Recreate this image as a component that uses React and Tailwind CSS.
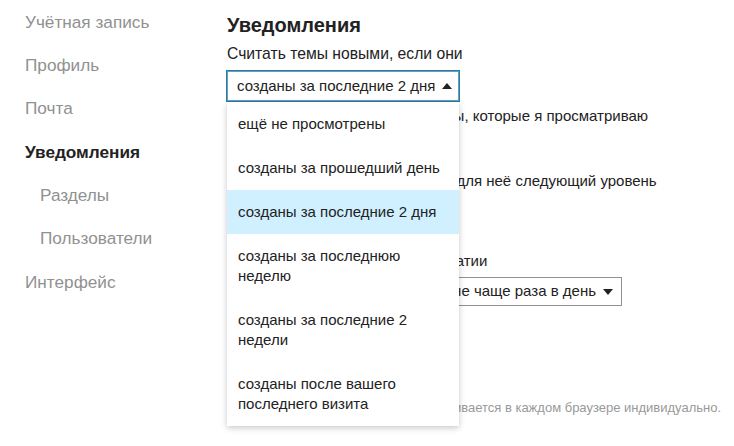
import React from "react";

const F = { fontFamily: '"Liberation Sans", Arial, sans-serif' };

function Up() {
  return (
    <svg width="10" height="6" viewBox="0 0 10 6" className="shrink-0">
      <path d="M0 6 L5 0 L10 6 Z" fill="#222" />
    </svg>
  );
}
function Down() {
  return (
    <svg width="10" height="6" viewBox="0 0 10 6" className="shrink-0">
      <path d="M0 0 L10 0 L5 6 Z" fill="#222" />
    </svg>
  );
}

const nav = [
  { t: "Учётная запись" },
  { t: "Профиль" },
  { t: "Почта" },
  { t: "Уведомления", active: true },
  { t: "Разделы", sub: true },
  { t: "Пользователи", sub: true },
  { t: "Интерфейс" },
];

const options = [
  { t: "ещё не просмотрены" },
  { t: "созданы за прошедший день" },
  { t: "созданы за последние 2 дня", sel: true },
  { t: "созданы за последнюю неделю" },
  { t: "созданы за последние 2 недели" },
  { t: "созданы после вашего последнего визита" },
];

export default function App() {
  return (
    <div style={F} className="w-[734px] h-[446px] overflow-hidden bg-white text-[#222] flex">
      <nav className="w-[227px] shrink-0 pl-[25px] pt-[1px] flex flex-col">
        {nav.map((n) => (
          <div
            key={n.t}
            className={
              "h-[43.33px] flex items-center text-[17.2px] " +
              (n.active ? "font-bold text-[#222]" : "text-[#919191]") +
              (n.sub ? " pl-[15px]" : "")
            }
          >
            {n.t}
          </div>
        ))}
      </nav>
      <main className="flex-1 pt-[13px] flex flex-col items-start text-[15px]">
        <h2 className="text-[20px] leading-[24px] font-bold">Уведомления</h2>
        <div className="mt-[7px] leading-[20px] text-[15.7px]">Считать темы новыми, если они</div>
        <div className="relative mt-[6px] -ml-[1px]">
          <div className="w-[234px] h-[32px] border border-[#0088cc] flex">
            <div className="flex-1 border border-[#919191] flex items-center justify-between pl-[9px] pr-[6px]">
              <span className="whitespace-nowrap">созданы за последние 2 дня</span>
              <Up />
            </div>
          </div>
          <ul className="absolute z-10 left-[1px] top-[32px] w-[232px] bg-white shadow-[0_2px_6px_rgba(0,0,0,0.22)]">
            {options.map((o) => (
              <li
                key={o.t}
                className={
                  "min-h-[44px] px-[11px] py-[11.5px] leading-[20.5px] flex items-center " +
                  (o.sel ? "bg-[#d1f0ff]" : "")
                }
              >
                <span>{o.t}</span>
              </li>
            ))}
          </ul>
        </div>
        <div className="mt-[4px] leading-[20px] whitespace-nowrap">Автоматически отслеживать темы, которые я просматриваю</div>
        <div className="mt-[5px] h-[30px] w-[200px] border border-[#919191] flex items-center justify-between px-[10px]">
          <span>после 4 минут</span>
          <Down />
        </div>
        <div className="mt-[10px] leading-[20px] whitespace-nowrap">Когда я отвечаю в теме, ставить для неё следующий уровень</div>
        <div className="mt-[5px] h-[30px] w-[200px] border border-[#919191] flex items-center justify-between px-[10px]">
          <span>Отслеживать</span>
          <Down />
        </div>
        <div className="mt-[25px] leading-[20px] whitespace-nowrap">Уведомлять при получении симпатии</div>
        <div className="mt-[6px] h-[29px] w-[395px] border border-[#919191] flex items-center justify-end gap-[7px] pr-[8px]">
          <span className="whitespace-nowrap">при первой симпатии и затем не чаще раза в день</span>
          <Down />
        </div>
        <button className="mt-[28px] h-[34px] px-[12px] bg-[#e9e9e9] text-[14px]">Включить оповещения</button>
        <div className="mt-[31px] leading-[18px] text-[13px] text-[#999] whitespace-nowrap">
          Примечание: этот параметр устанавливается в каждом браузере индивидуально.
        </div>
      </main>
    </div>
  );
}
